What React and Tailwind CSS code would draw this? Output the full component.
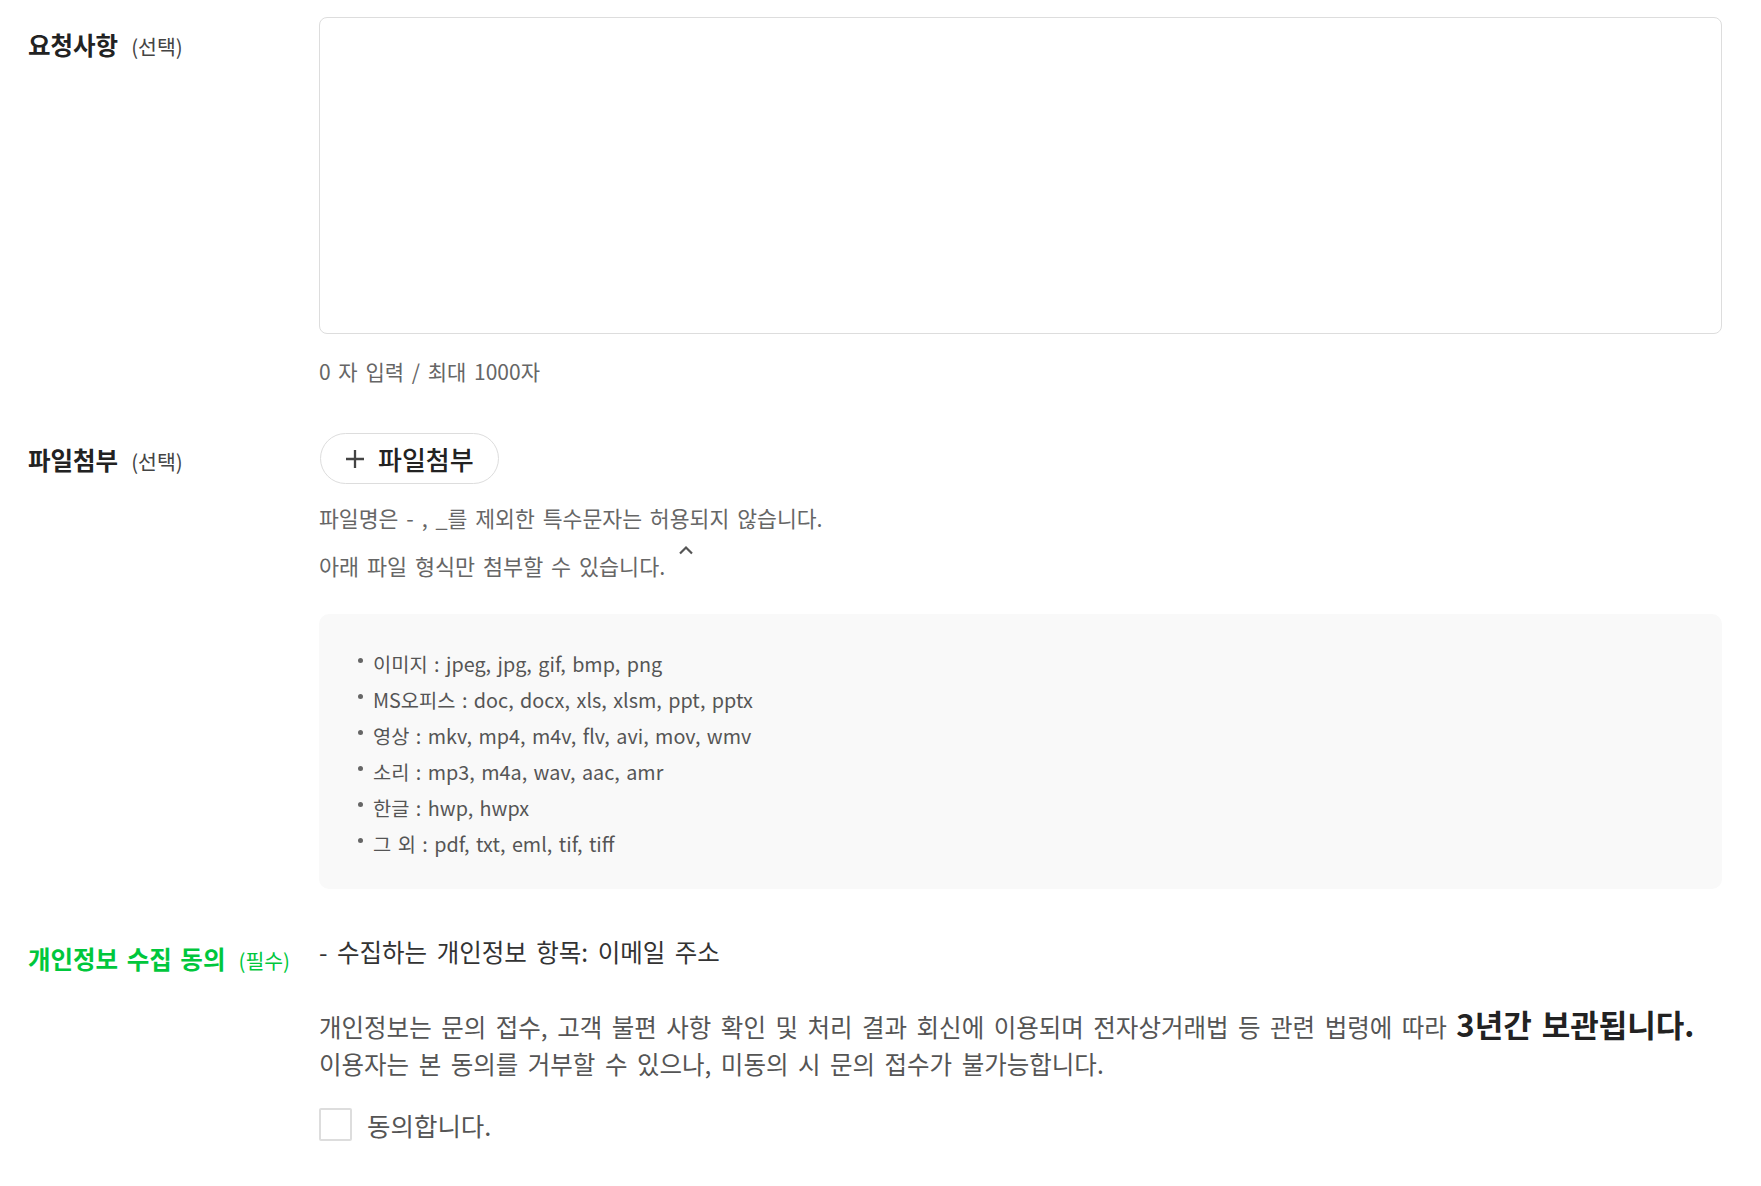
import React from "react";

function Plus() {
  return (
    <svg width="20" height="20" viewBox="0 0 20 20" fill="none" className="shrink-0">
      <path d="M10 1v18M1 10h18" stroke="#444" strokeWidth="2.3" />
    </svg>
  );
}

function Caret() {
  return (
    <svg width="16" height="10" viewBox="0 0 16 10" fill="none" className="shrink-0 ml-[13px] -mt-[7px]">
      <path d="M2 8.5L8 2.5L14 8.5" stroke="#555" strokeWidth="2.2" />
    </svg>
  );
}

const items = [
  "이미지 : jpeg, jpg, gif, bmp, png",
  "MS오피스 : doc, docx, xls, xlsm, ppt, pptx",
  "영상 : mkv, mp4, m4v, flv, avi, mov, wmv",
  "소리 : mp3, m4a, wav, aac, amr",
  "한글 : hwp, hwpx",
  "그 외 : pdf, txt, eml, tif, tiff",
];

export default function App() {
  return (
    <div className="w-[1761px] min-h-[1186px] bg-white pl-[28px] pr-[39px] pt-[17px] pb-[40px] font-['Noto_Sans_CJK_KR','Noto_Sans_CJK_SC',sans-serif] text-[#222]">
      {/* Row 1 */}
      <div className="flex">
        <div className="w-[291px] shrink-0 mt-[11px] flex items-baseline leading-[33px]">
          <span className="text-[24.5px] font-bold text-[#222]">요청사항</span>
          <span className="ml-[13px] text-[20.5px] text-[#444]">(선택)</span>
        </div>
        <div className="flex-1">
          <textarea className="block w-full h-[317px] border border-[#dddddd] rounded-[8px] resize-none outline-none bg-white" />
          <p className="mt-[24px] text-[21px] leading-[27px] text-[#666] [word-spacing:3px]">0 자 입력 / 최대 1000자</p>
        </div>
      </div>

      {/* Row 2 */}
      <div className="flex mt-[48px]">
        <div className="w-[291px] shrink-0 mt-[10px] flex items-baseline leading-[33px]">
          <span className="text-[24.5px] font-bold text-[#222]">파일첨부</span>
          <span className="ml-[13px] text-[20.5px] text-[#444]">(선택)</span>
        </div>
        <div className="flex-1">
          <button className="ml-[1px] flex items-center h-[51px] w-[179px] rounded-full border border-[#dddddd] bg-white pl-[24px] gap-[13px]">
            <Plus />
            <span className="text-[26px] font-medium text-[#222] leading-none">파일첨부</span>
          </button>
          <p className="mt-[20px] text-[21.6px] leading-[27px] text-[#666] [word-spacing:3px]">
            파일명은 - , _를 제외한 특수문자는 허용되지 않습니다.
          </p>
          <div className="mt-[21px] flex items-start">
            <p className="text-[21.8px] leading-[27px] text-[#666] [word-spacing:3px]">아래 파일 형식만 첨부할 수 있습니다.</p>
            <Caret />
          </div>
          <div className="mt-[35px] rounded-[10px] bg-[#f9f9f9] pt-[32px] pb-[27px] pl-[39px]">
            <ul>
              {items.map((t) => (
                <li key={t} className="flex items-center leading-[36px] text-[19.8px] text-[#555] [word-spacing:2px]">
                  <span className="w-[5px] h-[5px] rounded-full bg-[#666] mr-[10px] -translate-y-[4px] shrink-0" />
                  <span>{t}</span>
                </li>
              ))}
            </ul>
          </div>
        </div>
      </div>

      {/* Row 3 */}
      <div className="flex mt-[46px]">
        <div className="w-[291px] shrink-0 mt-[6.5px] flex items-baseline leading-[33px]">
          <span className="text-[24.5px] font-bold text-[#00c73c] [word-spacing:3px]">개인정보 수집 동의</span>
          <span className="ml-[13px] text-[20.5px] text-[#00c73c]">(필수)</span>
        </div>
        <div className="flex-1">
          <p className="text-[24.5px] leading-[33px] text-[#333] [word-spacing:4px]">- 수집하는 개인정보 항목: 이메일 주소</p>
          <p className="mt-[39.5px] text-[24.5px] leading-[37px] text-[#555] [word-spacing:4px]">
            개인정보는 문의 접수, 고객 불편 사항 확인 및 처리 결과 회신에 이용되며 전자상거래법 등 관련 법령에 따라{" "}
            <span className="text-[31px] font-bold text-[#222] leading-none [word-spacing:3px]">3년간 보관됩니다.</span>
            <br />
            이용자는 본 동의를 거부할 수 있으나, 미동의 시 문의 접수가 불가능합니다.
          </p>
          <label className="mt-[26px] flex items-center">
            <span className="w-[33px] h-[33px] border-2 border-[#dddddd] rounded-[2px] bg-white shrink-0" />
            <span className="ml-[15px] text-[25.5px] leading-[33px] text-[#555]">동의합니다.</span>
          </label>
        </div>
      </div>
    </div>
  );
}
